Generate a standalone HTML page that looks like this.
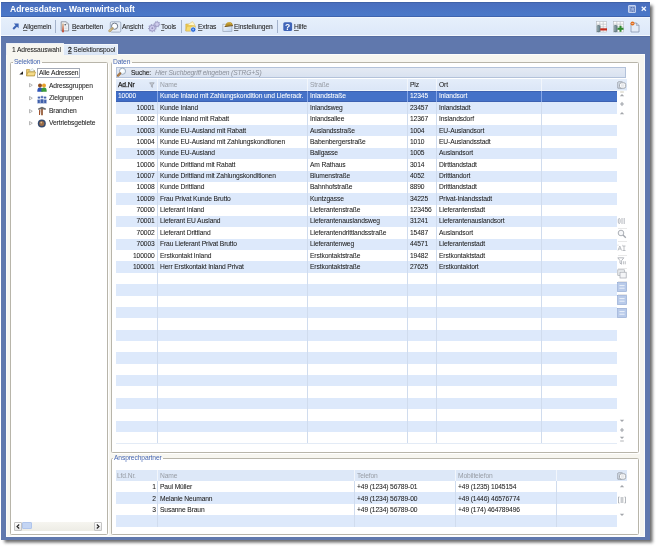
<!DOCTYPE html><html><head><meta charset="utf-8"><style>
*{margin:0;padding:0;box-sizing:border-box}
html,body{width:659px;height:548px;overflow:hidden;background:#fff}
body{position:relative;font-family:"Liberation Sans",sans-serif;font-size:6.7px;color:#202020}
.a{position:absolute}
.t{position:absolute;white-space:nowrap;line-height:1;margin-top:-0.25px;letter-spacing:-0.12px;-webkit-text-stroke:0.05px currentColor;will-change:transform}
svg{position:absolute;overflow:visible}
u{text-decoration:underline;text-decoration-thickness:0.6px;text-underline-offset:0.7px;text-decoration-color:rgba(40,40,40,0.65)}
</style></head><body><div class="a" style="left:1.3px;top:1.5px;width:649.2px;height:538px;background:#6078ad;box-shadow:2.5px 2.5px 3px rgba(20,20,20,0.65)"></div>
<div class="a" style="left:1.3px;top:1.5px;width:649.2px;height:15px;background:linear-gradient(#496ebe,#4a78c9);border-top:1px solid #3f62a8;border-bottom:1px solid #3e63ae"></div>
<div class="t" style="left:10px;top:5.2px;font-size:8.5px;font-weight:bold;color:#fff;-webkit-text-stroke:0;letter-spacing:0">Adressdaten - Warenwirtschaft</div>
<div class="a" style="left:628.1px;top:5px;width:8px;height:7.7px;border:1px solid #c3d1ef;background:#9cb1de;border-radius:1px"></div>
<svg style="left:629.5px;top:6.5px" width="5.5" height="5" viewBox="0 0 5.5 5"><rect x="0.8" y="0.6" width="3.8" height="3.6" fill="none" stroke="#4a66a8" stroke-width="0.9" stroke-dasharray="1.2 0.6"/></svg>
<svg style="left:640.5px;top:5.8px" width="5.6" height="5.4" viewBox="0 0 5.6 5.4"><path d="M0.7 0.7L4.9 4.7M4.9 0.7L0.7 4.7" stroke="#f4f7fd" stroke-width="1.2"/></svg>
<div class="a" style="left:1.3px;top:16.5px;width:649.2px;height:20px;background:linear-gradient(#e6effb,#dce8f9);border-top:1px solid #f2f6fd;border-bottom:1px solid #566da0;box-shadow:inset 0 -1px 0 #f4f8fd"></div>
<div class="a" style="left:6px;top:54px;width:639px;height:482.5px;background:#f7f6f0;border-left:1px solid #fbfbf8;border-top:1px solid #fdfdfb;border-right:1px solid #fbfcfe;border-bottom:1.5px solid #fbfcfe"></div>
<div class="a" style="left:6px;top:42.5px;width:57.5px;height:12.5px;background:#f7f6f0;border:1px solid #eef1f6;border-bottom:none;border-radius:1px 1px 0 0"></div>
<div class="t" style="left:11.8px;top:47.4px;">1 Adressauswahl</div>
<div class="a" style="left:63px;top:44px;width:55px;height:10.5px;background:linear-gradient(#e6eef9,#d9e5f6);border:1px solid #f4f7fc;border-bottom:none"></div>
<div class="t" style="left:68px;top:47.3px;"><u style="-webkit-text-stroke:0.3px currentColor">2</u> Selektionspool</div>
<div class="a" style="left:10.3px;top:62.3px;width:97.7px;height:472.8px;border:1px solid #b8b5aa;border-radius:1.5px;background:#fff;box-shadow:1px 1px 0 #fff"></div>
<div class="t" style="left:12.5px;top:59.3px;color:#4868b4;background:linear-gradient(#f7f6f0 3px,#fff 4px);padding:0 1.5px 0 1px;-webkit-text-stroke:0">Selektion</div>
<div class="a" style="left:111px;top:62.3px;width:527.5px;height:390.6px;border:1px solid #b8b5aa;border-radius:1.5px;background:#fff;box-shadow:1px 1px 0 #fff"></div>
<div class="t" style="left:112.3px;top:59.3px;color:#4868b4;background:linear-gradient(#f7f6f0 3px,#fff 4px);padding:0 1.5px 0 1px;-webkit-text-stroke:0">Daten</div>
<div class="a" style="left:111px;top:457.6px;width:527.5px;height:77.5px;border:1px solid #b8b5aa;border-radius:1.5px;background:#fff;box-shadow:1px 1px 0 #fff"></div>
<div class="t" style="left:112.5px;top:455.2px;color:#4868b4;background:linear-gradient(#f7f6f0 2.6px,#fff 3.6px);padding:0 1.5px 0 1px;-webkit-text-stroke:0">Ansprechpartner</div>
<div class="a" style="left:115.5px;top:66.5px;width:510.5px;height:11.2px;background:linear-gradient(#e4eaf4,#d9e2f0);border:1px solid #b3c2da"></div>
<svg style="left:116px;top:67px" width="11" height="10" viewBox="0 0 11 10"><circle cx="6.5" cy="4.2" r="3.1" fill="#eef6fc" stroke="#8a9ab0" stroke-width="0.8"/><circle cx="6.1" cy="3.8" r="1.5" fill="#fff"/><path d="M4.2 6.4L2 8.6" stroke="#9a6a3a" stroke-width="2.2" stroke-linecap="round"/><path d="M3.6 7L2.4 8.2" stroke="#d8a060" stroke-width="0.8" stroke-linecap="round"/></svg>
<div class="t" style="left:130.5px;top:70px;color:#1e1e1e;-webkit-text-stroke:0.1px #1e1e1e">Suche:</div>
<div class="t" style="left:155px;top:70px;font-style:italic;color:#8b909a;-webkit-text-stroke:0">Hier Suchbegriff eingeben (STRG+S)</div>
<div class="a" style="left:116px;top:78.5px;width:511px;height:12.5px;background:linear-gradient(#e4edfa,#dbe6f7);box-shadow:inset 0 -1px 0 #eef4fc"></div>
<div class="a" style="left:116px;top:102.36px;width:501px;height:11.365px;background:#dde9fb"></div>
<div class="a" style="left:116px;top:125.09px;width:501px;height:11.365px;background:#dde9fb"></div>
<div class="a" style="left:116px;top:147.82px;width:501px;height:11.365px;background:#dde9fb"></div>
<div class="a" style="left:116px;top:170.56px;width:501px;height:11.365px;background:#dde9fb"></div>
<div class="a" style="left:116px;top:193.28px;width:501px;height:11.365px;background:#dde9fb"></div>
<div class="a" style="left:116px;top:216.01px;width:501px;height:11.365px;background:#dde9fb"></div>
<div class="a" style="left:116px;top:238.75px;width:501px;height:11.365px;background:#dde9fb"></div>
<div class="a" style="left:116px;top:261.48px;width:501px;height:11.365px;background:#dde9fb"></div>
<div class="a" style="left:116px;top:284.21px;width:501px;height:11.365px;background:#dde9fb"></div>
<div class="a" style="left:116px;top:306.94px;width:501px;height:11.365px;background:#dde9fb"></div>
<div class="a" style="left:116px;top:329.66px;width:501px;height:11.365px;background:#dde9fb"></div>
<div class="a" style="left:116px;top:352.39px;width:501px;height:11.365px;background:#dde9fb"></div>
<div class="a" style="left:116px;top:375.12px;width:501px;height:11.365px;background:#dde9fb"></div>
<div class="a" style="left:116px;top:397.86px;width:501px;height:11.365px;background:#dde9fb"></div>
<div class="a" style="left:116px;top:420.58px;width:501px;height:11.365px;background:#dde9fb"></div>
<div class="a" style="left:116px;top:91.0px;width:501px;height:11.365px;background:#4572c8;border-top:1px solid #3d62b2;border-bottom:1px solid #3d62b2"></div>
<div class="a" style="left:116px;top:91.0px;width:41px;height:11.365px;background:#3f6dc7;border-top:1px solid #3d62b2;border-bottom:1px solid #3d62b2"></div>
<div class="a" style="left:157px;top:78.5px;width:1px;height:365px;background:#d0dcee"></div>
<div class="a" style="left:157px;top:78.5px;width:1px;height:12.5px;background:#f2f6fc"></div>
<div class="a" style="left:157px;top:91.0px;width:1px;height:11.365px;background:#86a6e6"></div>
<div class="a" style="left:307px;top:78.5px;width:1px;height:365px;background:#d0dcee"></div>
<div class="a" style="left:307px;top:78.5px;width:1px;height:12.5px;background:#f2f6fc"></div>
<div class="a" style="left:307px;top:91.0px;width:1px;height:11.365px;background:#86a6e6"></div>
<div class="a" style="left:407px;top:78.5px;width:1px;height:365px;background:#d0dcee"></div>
<div class="a" style="left:407px;top:78.5px;width:1px;height:12.5px;background:#f2f6fc"></div>
<div class="a" style="left:407px;top:91.0px;width:1px;height:11.365px;background:#86a6e6"></div>
<div class="a" style="left:436px;top:78.5px;width:1px;height:365px;background:#d0dcee"></div>
<div class="a" style="left:436px;top:78.5px;width:1px;height:12.5px;background:#f2f6fc"></div>
<div class="a" style="left:436px;top:91.0px;width:1px;height:11.365px;background:#86a6e6"></div>
<div class="a" style="left:541px;top:78.5px;width:1px;height:365px;background:#d0dcee"></div>
<div class="a" style="left:541px;top:78.5px;width:1px;height:12.5px;background:#f2f6fc"></div>
<div class="a" style="left:541px;top:91.0px;width:1px;height:11.365px;background:#86a6e6"></div>
<div class="a" style="left:116px;top:443px;width:501px;height:1px;background:#e3ebf6"></div>
<div class="t" style="left:117.5px;top:82.4px;color:#1e1e1e;-webkit-text-stroke:0.25px #1e1e1e">Ad.Nr</div>
<div class="t" style="left:160px;top:82.4px;color:#989da5;-webkit-text-stroke:0">Name</div>
<div class="t" style="left:309.5px;top:82.4px;color:#989da5;-webkit-text-stroke:0">Straße</div>
<div class="t" style="left:410px;top:82.4px;">Plz</div>
<div class="t" style="left:439px;top:82.4px;">Ort</div>
<svg style="left:148.5px;top:82.3px" width="6" height="6" viewBox="0 0 6 6"><path d="M0.6 0.8H5.2L3.4 3V5.4L2.4 4.6V3Z" fill="#c9ced6" stroke="#8b9099" stroke-width="0.6"/></svg>
<div class="t" style="left:117.5px;top:93.7px;color:#fff">10000</div>
<div class="t" style="left:160px;top:93.7px;color:#fff">Kunde Inland mit Zahlungskondition und Lieferadr.</div>
<div class="t" style="left:309.5px;top:93.7px;color:#fff">Inlandstraße</div>
<div class="t" style="left:410px;top:93.7px;color:#fff">12345</div>
<div class="t" style="left:439px;top:93.7px;color:#fff">Inlandsort</div>
<div class="t" style="left:116px;top:105.06px;color:#202020;width:38.6px;text-align:right">10001</div>
<div class="t" style="left:160px;top:105.06px;color:#202020">Kunde Inland</div>
<div class="t" style="left:309.5px;top:105.06px;color:#202020">Inlandsweg</div>
<div class="t" style="left:410px;top:105.06px;color:#202020">23457</div>
<div class="t" style="left:439px;top:105.06px;color:#202020">Inlandstadt</div>
<div class="t" style="left:116px;top:116.43px;color:#202020;width:38.6px;text-align:right">10002</div>
<div class="t" style="left:160px;top:116.43px;color:#202020">Kunde Inland mit Rabatt</div>
<div class="t" style="left:309.5px;top:116.43px;color:#202020">Inlandsallee</div>
<div class="t" style="left:410px;top:116.43px;color:#202020">12367</div>
<div class="t" style="left:439px;top:116.43px;color:#202020">Inslandsdorf</div>
<div class="t" style="left:116px;top:127.8px;color:#202020;width:38.6px;text-align:right">10003</div>
<div class="t" style="left:160px;top:127.8px;color:#202020">Kunde EU-Ausland mit Rabatt</div>
<div class="t" style="left:309.5px;top:127.8px;color:#202020">Auslandsstraße</div>
<div class="t" style="left:410px;top:127.8px;color:#202020">1004</div>
<div class="t" style="left:439px;top:127.8px;color:#202020">EU-Auslandsort</div>
<div class="t" style="left:116px;top:139.16px;color:#202020;width:38.6px;text-align:right">10004</div>
<div class="t" style="left:160px;top:139.16px;color:#202020">Kunde EU-Ausland mit Zahlungskondtionen</div>
<div class="t" style="left:309.5px;top:139.16px;color:#202020">Babenbergerstraße</div>
<div class="t" style="left:410px;top:139.16px;color:#202020">1010</div>
<div class="t" style="left:439px;top:139.16px;color:#202020">EU-Auslandsstadt</div>
<div class="t" style="left:116px;top:150.52px;color:#202020;width:38.6px;text-align:right">10005</div>
<div class="t" style="left:160px;top:150.52px;color:#202020">Kunde EU-Ausland</div>
<div class="t" style="left:309.5px;top:150.52px;color:#202020">Ballgasse</div>
<div class="t" style="left:410px;top:150.52px;color:#202020">1005</div>
<div class="t" style="left:439px;top:150.52px;color:#202020">Auslandsort</div>
<div class="t" style="left:116px;top:161.89px;color:#202020;width:38.6px;text-align:right">10006</div>
<div class="t" style="left:160px;top:161.89px;color:#202020">Kunde Drittland mit Rabatt</div>
<div class="t" style="left:309.5px;top:161.89px;color:#202020">Am Rathaus</div>
<div class="t" style="left:410px;top:161.89px;color:#202020">3014</div>
<div class="t" style="left:439px;top:161.89px;color:#202020">Dirttlandstadt</div>
<div class="t" style="left:116px;top:173.25px;color:#202020;width:38.6px;text-align:right">10007</div>
<div class="t" style="left:160px;top:173.25px;color:#202020">Kunde Drittland mit Zahlungskonditionen</div>
<div class="t" style="left:309.5px;top:173.25px;color:#202020">Blumenstraße</div>
<div class="t" style="left:410px;top:173.25px;color:#202020">4052</div>
<div class="t" style="left:439px;top:173.25px;color:#202020">Drittlandort</div>
<div class="t" style="left:116px;top:184.62px;color:#202020;width:38.6px;text-align:right">10008</div>
<div class="t" style="left:160px;top:184.62px;color:#202020">Kunde Drittland</div>
<div class="t" style="left:309.5px;top:184.62px;color:#202020">Bahnhofstraße</div>
<div class="t" style="left:410px;top:184.62px;color:#202020">8890</div>
<div class="t" style="left:439px;top:184.62px;color:#202020">Drittlandstadt</div>
<div class="t" style="left:116px;top:195.98px;color:#202020;width:38.6px;text-align:right">10009</div>
<div class="t" style="left:160px;top:195.98px;color:#202020">Frau Privat Kunde Brutto</div>
<div class="t" style="left:309.5px;top:195.98px;color:#202020">Kuntzgasse</div>
<div class="t" style="left:410px;top:195.98px;color:#202020">34225</div>
<div class="t" style="left:439px;top:195.98px;color:#202020">Privat-Inlandsstadt</div>
<div class="t" style="left:116px;top:207.35px;color:#202020;width:38.6px;text-align:right">70000</div>
<div class="t" style="left:160px;top:207.35px;color:#202020">Lieferant Inland</div>
<div class="t" style="left:309.5px;top:207.35px;color:#202020">Lieferantenstraße</div>
<div class="t" style="left:410px;top:207.35px;color:#202020">123456</div>
<div class="t" style="left:439px;top:207.35px;color:#202020">Lieferantenstadt</div>
<div class="t" style="left:116px;top:218.71px;color:#202020;width:38.6px;text-align:right">70001</div>
<div class="t" style="left:160px;top:218.71px;color:#202020">Lieferant EU Ausland</div>
<div class="t" style="left:309.5px;top:218.71px;color:#202020">Lieferantenauslandsweg</div>
<div class="t" style="left:410px;top:218.71px;color:#202020">31241</div>
<div class="t" style="left:439px;top:218.71px;color:#202020">Lieferantenauslandsort</div>
<div class="t" style="left:116px;top:230.08px;color:#202020;width:38.6px;text-align:right">70002</div>
<div class="t" style="left:160px;top:230.08px;color:#202020">Lieferant Drittland</div>
<div class="t" style="left:309.5px;top:230.08px;color:#202020">Lieferantendrittlandsstraße</div>
<div class="t" style="left:410px;top:230.08px;color:#202020">15487</div>
<div class="t" style="left:439px;top:230.08px;color:#202020">Auslandsort</div>
<div class="t" style="left:116px;top:241.44px;color:#202020;width:38.6px;text-align:right">70003</div>
<div class="t" style="left:160px;top:241.44px;color:#202020">Frau Lieferant Privat Brutto</div>
<div class="t" style="left:309.5px;top:241.44px;color:#202020">Lieferantenweg</div>
<div class="t" style="left:410px;top:241.44px;color:#202020">44571</div>
<div class="t" style="left:439px;top:241.44px;color:#202020">Lieferantenstadt</div>
<div class="t" style="left:116px;top:252.81px;color:#202020;width:38.6px;text-align:right">100000</div>
<div class="t" style="left:160px;top:252.81px;color:#202020">Erstkontakt Inland</div>
<div class="t" style="left:309.5px;top:252.81px;color:#202020">Erstkontaktstraße</div>
<div class="t" style="left:410px;top:252.81px;color:#202020">19482</div>
<div class="t" style="left:439px;top:252.81px;color:#202020">Erstkontaktstadt</div>
<div class="t" style="left:116px;top:264.18px;color:#202020;width:38.6px;text-align:right">100001</div>
<div class="t" style="left:160px;top:264.18px;color:#202020">Herr Erstkontakt Inland Privat</div>
<div class="t" style="left:309.5px;top:264.18px;color:#202020">Erstkontaktstraße</div>
<div class="t" style="left:410px;top:264.18px;color:#202020">27625</div>
<div class="t" style="left:439px;top:264.18px;color:#202020">Erstkontaktort</div>
<svg style="left:617px;top:81px" width="9.5" height="8" viewBox="0 0 9.5 8"><path d="M1.2 0.8H5.5M0.8 1V7.2H5" fill="none" stroke="#8f949b" stroke-width="0.8"/><rect x="2.5" y="1.8" width="6.2" height="5.4" rx="1.8" fill="#fff" stroke="#8f949b" stroke-width="0.8"/><rect x="3.8" y="3.2" width="3.6" height="2.6" fill="#e6e8eb"/></svg>
<svg style="left:619px;top:91.1px" width="6" height="7" viewBox="0 0 6 7"><path d="M1.2 1H4.8" stroke="#c8c4b0" stroke-width="0.9"/><path d="M0.8 5.2L3 3L5.2 5.2Z" fill="#a3a6ab"/></svg>
<svg style="left:619px;top:101.2px" width="6" height="6" viewBox="0 0 6 6"><path d="M3 0.8L5 3L3 5.2L1 3Z" fill="#b4b7bc"/></svg>
<svg style="left:619px;top:110.3px" width="6" height="6" viewBox="0 0 6 6"><path d="M0.8 4.2L3 2L5.2 4.2Z" fill="#a3a6ab"/></svg>
<svg style="left:619px;top:418px" width="6" height="6" viewBox="0 0 6 6"><path d="M0.8 1.8L3 4L5.2 1.8Z" fill="#a3a6ab"/></svg>
<svg style="left:619px;top:427px" width="6" height="6" viewBox="0 0 6 6"><path d="M3 0.8L5 3L3 5.2L1 3Z" fill="#b4b7bc"/></svg>
<svg style="left:619px;top:435.2px" width="6" height="7" viewBox="0 0 6 7"><path d="M1.2 6H4.8" stroke="#a8aaae" stroke-width="0.9"/><path d="M0.8 1.8L3 4L5.2 1.8Z" fill="#a3a6ab"/></svg>
<svg style="left:617px;top:216px" width="10" height="10" viewBox="0 0 10 10"><path d="M2.2 2.3C0.9 2.3 0.9 7.7 2.2 7.7C3.5 7.7 3.5 2.3 2.2 2.3ZM5 2V8M7.2 2V8" fill="none" stroke="#a3a7ae" stroke-width="0.8"/></svg>
<div class="a" style="left:617.5px;top:228px;width:9px;height:0.6px;background:#e8e8e8"></div>
<div class="a" style="left:617.5px;top:241px;width:9px;height:0.6px;background:#e8e8e8"></div>
<div class="a" style="left:617.5px;top:254.5px;width:9px;height:0.6px;background:#e8e8e8"></div>
<div class="a" style="left:617.5px;top:267.5px;width:9px;height:0.6px;background:#e8e8e8"></div>
<div class="a" style="left:617.5px;top:280.5px;width:9px;height:0.6px;background:#e8e8e8"></div>
<div class="a" style="left:617.5px;top:294px;width:9px;height:0.6px;background:#e8e8e8"></div>
<div class="a" style="left:617.5px;top:307.5px;width:9px;height:0.6px;background:#e8e8e8"></div>
<svg style="left:617px;top:229.4px" width="10" height="10" viewBox="0 0 10 10"><circle cx="4" cy="4" r="2.8" fill="#f6f7f9" stroke="#a3a7ae" stroke-width="0.9"/><path d="M6 6L8.8 8.8" stroke="#a3a7ae" stroke-width="1.3"/></svg>
<svg style="left:617px;top:243px" width="10" height="10" viewBox="0 0 10 10"><path d="M1 7.5L2.8 3L4.6 7.5M1.7 6H3.9M5.5 3H8.5M5.5 7.5H8.5M7 3V7.5" fill="none" stroke="#a3a7ae" stroke-width="0.7"/><path d="M1 3V1.5M5.5 3V1.8" stroke="#c9ccd0" stroke-width="0.6"/></svg>
<svg style="left:617px;top:256px" width="10" height="10" viewBox="0 0 10 10"><path d="M0.8 1.8H6.8L4.6 4.6V8.2L3 7.2V4.6Z" fill="none" stroke="#a3a7ae" stroke-width="0.8"/><path d="M6.6 5.2V8.3M8.3 5.2V8.3" stroke="#a3a7ae" stroke-width="0.7"/></svg>
<svg style="left:617px;top:269px" width="10" height="10" viewBox="0 0 10 10"><rect x="0.8" y="0.8" width="6.5" height="5.5" fill="#eef0f3" stroke="#a3a7ae" stroke-width="0.7"/><rect x="3" y="3.2" width="6.2" height="5.8" fill="#f4f5f7" stroke="#a3a7ae" stroke-width="0.7"/></svg>
<svg style="left:617px;top:282.2px" width="10" height="10" viewBox="0 0 10 10"><rect x="0.6" y="0.6" width="8.8" height="8.8" fill="#b9cbea" stroke="#93aad4" stroke-width="0.7"/><path d="M2.4 3.6H7.6M2.4 6.2H7.6" stroke="#f2f6fc" stroke-width="0.9"/></svg>
<svg style="left:617px;top:295.2px" width="10" height="10" viewBox="0 0 10 10"><rect x="0.6" y="0.6" width="8.8" height="8.8" fill="#b9cbea" stroke="#93aad4" stroke-width="0.7"/><path d="M2.4 3.6H7.6M2.4 6.2H7.6" stroke="#f2f6fc" stroke-width="0.9"/></svg>
<svg style="left:617px;top:308.3px" width="10" height="10" viewBox="0 0 10 10"><rect x="0.6" y="0.6" width="8.8" height="8.8" fill="#b9cbea" stroke="#93aad4" stroke-width="0.7"/><path d="M2.4 3.6H7.6M2.4 6.2H7.6" stroke="#f2f6fc" stroke-width="0.9"/></svg>
<div class="a" style="left:115.5px;top:470px;width:511.5px;height:10.8px;background:#dde8f8"></div>
<div class="a" style="left:115.5px;top:492.45px;width:501.5px;height:11.45px;background:#dde9fb"></div>
<div class="a" style="left:115.5px;top:515.35px;width:501.5px;height:11.45px;background:#dde9fb"></div>
<div class="a" style="left:157px;top:470px;width:1px;height:56.8px;background:#d0dcee"></div>
<div class="a" style="left:157px;top:470px;width:1px;height:10.8px;background:#f2f6fc"></div>
<div class="a" style="left:354px;top:470px;width:1px;height:56.8px;background:#d0dcee"></div>
<div class="a" style="left:354px;top:470px;width:1px;height:10.8px;background:#f2f6fc"></div>
<div class="a" style="left:455px;top:470px;width:1px;height:56.8px;background:#d0dcee"></div>
<div class="a" style="left:455px;top:470px;width:1px;height:10.8px;background:#f2f6fc"></div>
<div class="a" style="left:556px;top:470px;width:1px;height:56.8px;background:#d0dcee"></div>
<div class="a" style="left:556px;top:470px;width:1px;height:10.8px;background:#f2f6fc"></div>
<div class="t" style="left:117px;top:473px;color:#989da5;-webkit-text-stroke:0">Lfd.Nr.</div>
<div class="t" style="left:160px;top:473px;color:#989da5;-webkit-text-stroke:0">Name</div>
<div class="t" style="left:357px;top:473px;color:#989da5;-webkit-text-stroke:0">Telefon</div>
<div class="t" style="left:458px;top:473px;color:#989da5;-webkit-text-stroke:0">Mobiltelefon</div>
<div class="t" style="left:115.5px;top:484.3px;width:39.8px;text-align:right">1</div>
<div class="t" style="left:160px;top:484.3px;">Paul Müller</div>
<div class="t" style="left:357px;top:484.3px;">+49 (1234) 56789-01</div>
<div class="t" style="left:458px;top:484.3px;">+49 (1235) 1045154</div>
<div class="t" style="left:115.5px;top:495.75px;width:39.8px;text-align:right">2</div>
<div class="t" style="left:160px;top:495.75px;">Melanie Neumann</div>
<div class="t" style="left:357px;top:495.75px;">+49 (1234) 56789-00</div>
<div class="t" style="left:458px;top:495.75px;">+49 (1446) 46576774</div>
<div class="t" style="left:115.5px;top:507.2px;width:39.8px;text-align:right">3</div>
<div class="t" style="left:160px;top:507.2px;">Susanne Braun</div>
<div class="t" style="left:357px;top:507.2px;">+49 (1234) 56789-00</div>
<div class="t" style="left:458px;top:507.2px;">+49 (174) 464789496</div>
<svg style="left:617px;top:472px" width="9.5" height="8" viewBox="0 0 9.5 8"><path d="M1.2 0.8H5.5M0.8 1V7.2H5" fill="none" stroke="#8f949b" stroke-width="0.8"/><rect x="2.5" y="1.8" width="6.2" height="5.4" rx="1.8" fill="#fff" stroke="#8f949b" stroke-width="0.8"/><rect x="3.8" y="3.2" width="3.6" height="2.6" fill="#e6e8eb"/></svg>
<svg style="left:619px;top:483.3px" width="6" height="6" viewBox="0 0 6 6"><path d="M0.8 4.2L3 2L5.2 4.2Z" fill="#a3a6ab"/></svg>
<svg style="left:617px;top:495.2px" width="10" height="10" viewBox="0 0 10 10"><path d="M2.5 2H1.5V8H2.5M7.5 2H8.5V8H7.5M4.2 2V8M5.8 2V8" fill="none" stroke="#a0a4ab" stroke-width="0.8"/></svg>
<svg style="left:619px;top:511.79999999999995px" width="6" height="6" viewBox="0 0 6 6"><path d="M0.8 1.8L3 4L5.2 1.8Z" fill="#a3a6ab"/></svg>
<svg style="left:18.5px;top:71px" width="5" height="4" viewBox="0 0 5 4"><path d="M0.3 3.6H4L4 0.2Z" fill="#222"/></svg>
<svg style="left:25.5px;top:68px" width="10" height="8.5" viewBox="0 0 10 8.5"><path d="M0.5 1.5H3.5L4.5 2.5H8.5V7.8H0.5Z" fill="#e7c66a" stroke="#b08d35" stroke-width="0.6"/><path d="M3 3.2L6.5 0.6L8.2 3.2Z" fill="#fff" stroke="#8aa" stroke-width="0.4"/><path d="M0.5 7.8L2 4H9.5L8.5 7.8Z" fill="#f5dc8a" stroke="#b08d35" stroke-width="0.6"/></svg>
<div class="a" style="left:36.8px;top:68px;width:43.5px;height:9.5px;border:1px solid #a4aab6;background:#fff"></div>
<div class="t" style="left:38.6px;top:70px;">Alle Adressen</div>
<svg style="left:28.8px;top:83.39999999999999px" width="4" height="5" viewBox="0 0 4 5"><path d="M0.5 0.5L3.3 2.2L0.5 3.9Z" fill="none" stroke="#9a9a9a" stroke-width="0.7"/></svg>
<svg style="left:28.8px;top:95.8px" width="4" height="5" viewBox="0 0 4 5"><path d="M0.5 0.5L3.3 2.2L0.5 3.9Z" fill="none" stroke="#9a9a9a" stroke-width="0.7"/></svg>
<svg style="left:28.8px;top:108.6px" width="4" height="5" viewBox="0 0 4 5"><path d="M0.5 0.5L3.3 2.2L0.5 3.9Z" fill="none" stroke="#9a9a9a" stroke-width="0.7"/></svg>
<svg style="left:28.8px;top:121.2px" width="4" height="5" viewBox="0 0 4 5"><path d="M0.5 0.5L3.3 2.2L0.5 3.9Z" fill="none" stroke="#9a9a9a" stroke-width="0.7"/></svg>
<svg style="left:37px;top:82.6px" width="10" height="9" viewBox="0 0 10 9"><path d="M0.3 8.8C0.3 5.2 1.2 4.4 3 4.4C4.8 4.4 5.7 5.2 5.7 8.8Z" fill="#2f55b8"/><circle cx="3" cy="2.4" r="2" fill="#8e4f22"/><path d="M4.3 8.8C4.3 5.2 5.2 4.6 7 4.6C8.8 4.6 9.7 5.2 9.7 8.8Z" fill="#3a9a3a"/><circle cx="7" cy="2.6" r="2" fill="#e8a02a"/></svg>
<svg style="left:37px;top:94.6px" width="10" height="9" viewBox="0 0 10 9"><g fill="#3f5faa" stroke="#e8eef8" stroke-width="0.5"><path d="M0.3 8.5V5.2C0.3 4 3.7 4 3.7 5.2V8.5Z"/><path d="M6.3 8.5V5.2C6.3 4 9.7 4 9.7 5.2V8.5Z"/><path d="M3.2 8.5V4.8C3.2 3.6 6.8 3.6 6.8 4.8V8.5Z"/><circle cx="2" cy="2.6" r="1.4"/><circle cx="8" cy="2.6" r="1.4"/><circle cx="5" cy="2.1" r="1.4"/></g></svg>
<svg style="left:37px;top:105.8px" width="10" height="10" viewBox="0 0 10 10"><path d="M1 2.5L5 0.8L9 2.5L8.5 4L5 3L1.5 4Z" fill="#6c6c6c"/><path d="M4.2 3H5.8V9.3H4.2Z" fill="#8a4a22"/><path d="M2 4L3.5 4.2L3 9L2 9Z" fill="#a0522d"/></svg>
<svg style="left:37px;top:119.2px" width="10" height="9" viewBox="0 0 10 9"><circle cx="4.8" cy="4.4" r="4" fill="#34496e"/><circle cx="4.8" cy="4.4" r="2.5" fill="#9a6c48"/><circle cx="4.3" cy="3.6" r="0.9" fill="#d9b98a"/></svg>
<div class="t" style="left:48.7px;top:83.0px;">Adressgruppen</div>
<div class="t" style="left:48.7px;top:95.3px;">Zielgruppen</div>
<div class="t" style="left:48.7px;top:107.8px;">Branchen</div>
<div class="t" style="left:48.7px;top:120.5px;">Vertriebsgebiete</div>
<div class="a" style="left:14px;top:521.5px;width:88px;height:9.5px;background:linear-gradient(#f6f5f0,#edece5)"></div>
<div class="a" style="left:14px;top:521.5px;width:8px;height:9.5px;background:linear-gradient(#fdfdfd,#e7e7e7);border:1px solid #c4c4c4;border-radius:1px"></div>
<div class="a" style="left:93.5px;top:521.5px;width:8px;height:9.5px;background:linear-gradient(#fdfdfd,#e7e7e7);border:1px solid #c4c4c4;border-radius:1px"></div>
<svg style="left:16px;top:523.5px" width="4" height="5" viewBox="0 0 4 5"><path d="M3.2 0.5L1 2.5L3.2 4.5" fill="none" stroke="#222" stroke-width="1.1"/></svg>
<svg style="left:95.5px;top:523.5px" width="4" height="5" viewBox="0 0 4 5"><path d="M0.8 0.5L3 2.5L0.8 4.5" fill="none" stroke="#222" stroke-width="1.1"/></svg>
<div class="a" style="left:22px;top:522.3px;width:9.8px;height:6.8px;background:#c4d5f3;border:1px solid #b0c5ec;border-radius:1px"></div>
<div class="t" style="left:23.3px;top:24.5px;"><u>A</u>llgemein</div>
<div class="t" style="left:72px;top:24.5px;"><u>B</u>earbeiten</div>
<div class="t" style="left:121.7px;top:24.5px;">An<u>s</u>icht</div>
<div class="t" style="left:160.8px;top:24.5px;"><u>T</u>ools</div>
<div class="t" style="left:197.5px;top:24.5px;"><u>E</u>xtras</div>
<div class="t" style="left:234.2px;top:24.5px;"><u>E</u>instellungen</div>
<div class="t" style="left:294.2px;top:24.5px;"><u>H</u>ilfe</div>
<div class="a" style="left:55.2px;top:19.5px;width:1px;height:13.5px;background:#a4b3cc"></div>
<div class="a" style="left:180.8px;top:19.5px;width:1px;height:13.5px;background:#a4b3cc"></div>
<div class="a" style="left:277.2px;top:19.5px;width:1px;height:13.5px;background:#a4b3cc"></div>
<svg style="left:11.9px;top:23.3px" width="7" height="7" viewBox="0 0 7 7"><path d="M1.2 6L5 2.2" stroke="#3d64b5" stroke-width="2"/><path d="M1.8 0.4H6.6V5.2Z" fill="#3d64b5"/></svg>
<svg style="left:60.3px;top:21.3px" width="10" height="11" viewBox="0 0 10 11"><defs><linearGradient id="pg" gradientUnits="userSpaceOnUse" x1="0" y1="3" x2="0" y2="10.6"><stop offset="0" stop-color="#d8c0a0"/><stop offset="1" stop-color="#c03a20"/></linearGradient></defs><path d="M1.2 0.8H6.3L8.6 3.1V9.9H1.2Z" fill="#f3f5f8" stroke="#7a828d" stroke-width="0.8"/><path d="M6.3 0.8V3.1H8.6" fill="none" stroke="#9aa2ad" stroke-width="0.5"/><path d="M3 3.2V10.6" stroke="url(#pg)" stroke-width="1.7" stroke-linecap="round"/><circle cx="5.2" cy="3.8" r="0.8" fill="#404a55"/><path d="M4.5 6H7.3M4.5 7.6H7.3" stroke="#c5cbd3" stroke-width="0.5"/></svg>
<svg style="left:106px;top:20.5px" width="16" height="12" viewBox="0 0 16 12"><rect x="4.3" y="0.8" width="10.5" height="10.3" rx="1.2" fill="#e6edf7" stroke="#9aa8bf" stroke-width="0.9"/><circle cx="8.6" cy="5.2" r="3.1" fill="#fafcff" stroke="#6f7a8a" stroke-width="1"/><circle cx="8.2" cy="4.8" r="1.4" fill="#fff"/><path d="M6.5 7.3L3.5 10" stroke="#b89f6a" stroke-width="2.4" stroke-linecap="round"/><path d="M5.2 8.4L3.6 9.8" stroke="#e8dca8" stroke-width="0.9" stroke-linecap="round"/></svg>
<svg style="left:147.5px;top:21px" width="12" height="12" viewBox="0 0 12 12"><g fill="#cdcbec" stroke="#8785b2" stroke-width="0.7"><circle cx="9" cy="3.2" r="2.3"/><circle cx="4.3" cy="7.2" r="3"/></g><circle cx="9" cy="3.2" r="2.9" fill="none" stroke="#9c9ac4" stroke-width="1" stroke-dasharray="1 1.2"/><circle cx="4.3" cy="7.2" r="3.6" fill="none" stroke="#9c9ac4" stroke-width="1.1" stroke-dasharray="1.2 1.3"/><circle cx="4.3" cy="7.2" r="0.9" fill="#8f8db8"/></svg>
<svg style="left:184.5px;top:20.5px" width="12" height="12" viewBox="0 0 12 12"><path d="M0.8 3H4L5 4H9.5V10H0.8Z" fill="#eecb52" stroke="#c9a23a" stroke-width="0.5"/><path d="M2.5 4L7.5 0.6L10.3 4.5" fill="#fff6cc" stroke="#d8b85a" stroke-width="0.5"/><path d="M0.8 10L2 5.2H10.6L9.6 10Z" fill="#f6da6e" stroke="#d0aa40" stroke-width="0.4"/><circle cx="8.2" cy="8.6" r="2.6" fill="#2163d6" stroke="#e8f0ff" stroke-width="0.7"/><circle cx="8.2" cy="8.6" r="1" fill="#8fb5f5"/></svg>
<svg style="left:221.5px;top:19.7px" width="12" height="12" viewBox="0 0 12 12"><defs><linearGradient id="eg" x1="0" y1="0" x2="1" y2="1"><stop offset="0" stop-color="#fbfcfe"/><stop offset="1" stop-color="#bcd2ee"/></linearGradient></defs><rect x="0.9" y="4.2" width="9" height="7.3" fill="url(#eg)" stroke="#9aa6b8" stroke-width="0.7"/><path d="M3 6.4C3.5 3.5 5.5 2 7.5 2C9.5 2 10.6 3.5 10.8 5.5Z" fill="#b8922a"/><path d="M2.6 6.6L11 5.6" stroke="#6a4a18" stroke-width="0.9"/><path d="M5.5 3.2C6.5 2.6 8 2.6 8.8 3.4" stroke="#ecd070" stroke-width="0.7" fill="none"/></svg>
<svg style="left:282.5px;top:22px" width="9.5" height="9.5" viewBox="0 0 9.5 9.5"><rect x="0.3" y="0.3" width="8.8" height="8.8" rx="1.5" fill="#3f64b8"/><text x="4.7" y="7.8" font-family="Liberation Sans" font-weight="bold" font-size="8.5" fill="#fff" text-anchor="middle">?</text></svg>
<svg style="left:595.5px;top:21px" width="11.5" height="11.5" viewBox="0 0 11.5 11.5"><rect x="0.5" y="0.5" width="10" height="10.5" fill="#fbfbfb" stroke="#a9aeb3" stroke-width="0.5"/><path d="M0.5 3.2H10.5M0.5 5.8H10.5M0.5 8.4H10.5M3.8 0.5V11M7.2 0.5V11" stroke="#b5babf" stroke-width="0.6"/><path d="M0.8 4.5Q2.5 3.5 4.5 4.5V10.8Q2.5 11.6 0.8 10.8Z" fill="#6a8088"/><rect x="1.4" y="5" width="1" height="5" fill="#9fb3b8"/><rect x="4.2" y="7.3" width="6.8" height="2.2" fill="#c42a1c"/></svg>
<svg style="left:612.5px;top:21px" width="11.5" height="11.5" viewBox="0 0 11.5 11.5"><rect x="0.5" y="0.5" width="10" height="10.5" fill="#fbfbfb" stroke="#a9aeb3" stroke-width="0.5"/><path d="M0.5 3.2H10.5M0.5 5.8H10.5M0.5 8.4H10.5M3.8 0.5V11M7.2 0.5V11" stroke="#b5babf" stroke-width="0.6"/><path d="M0.8 4.5Q2.5 3.5 4.5 4.5V10.8Q2.5 11.6 0.8 10.8Z" fill="#6a8088"/><rect x="1.4" y="5" width="1" height="5" fill="#9fb3b8"/><path d="M7.5 4.8V10.8M4.5 7.8H10.5" stroke="#2c8a2c" stroke-width="2"/></svg>
<svg style="left:630px;top:21px" width="9.5" height="11.5" viewBox="0 0 9.5 11.5"><path d="M1 2H6.5L9 4.5V11H1Z" fill="#e4ecf8" stroke="#7d8aa3" stroke-width="0.7"/><path d="M6.5 2V4.5H9" fill="none" stroke="#7d8aa3" stroke-width="0.5"/><circle cx="2.5" cy="2.5" r="2" fill="#e0701c"/><path d="M1.5 2.5H3.5" stroke="#fde" stroke-width="0.6"/></svg></body></html>
